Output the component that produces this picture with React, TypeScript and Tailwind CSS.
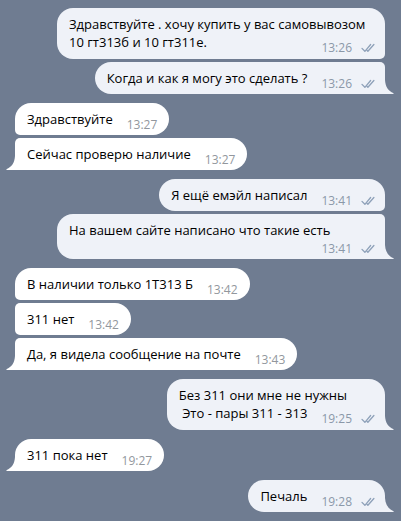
import React from "react";

type Msg = {
  out: boolean;
  lines: string[];
  time: string;
  first: boolean;
  tail: boolean;
  wide?: boolean;
  timeBelow?: boolean;
};

const groups: Msg[][] = [
  [
    {
      out: true,
      lines: ["Здравствуйте . хочу купить у вас самовывозом", "10 гт313б и 10 гт311е."],
      time: "13:26",
      first: true,
      tail: false,
      wide: true,
    },
    { out: true, lines: ["Когда и как я могу это сделать ?"], time: "13:26", first: false, tail: true },
  ],
  [
    { out: false, lines: ["Здравствуйте"], time: "13:27", first: true, tail: false },
    { out: false, lines: ["Сейчас проверю наличие"], time: "13:27", first: false, tail: true },
  ],
  [
    { out: true, lines: ["Я ещё емэйл написал"], time: "13:41", first: true, tail: false },
    {
      out: true,
      lines: ["На вашем сайте написано что такие есть"],
      time: "13:41",
      first: false,
      tail: true,
      wide: true,
      timeBelow: true,
    },
  ],
  [
    { out: false, lines: ["В наличии только 1Т313 Б"], time: "13:42", first: true, tail: false },
    { out: false, lines: ["311 нет"], time: "13:42", first: false, tail: false },
    { out: false, lines: ["Да, я видела сообщение на почте"], time: "13:43", first: false, tail: true },
  ],
  [
    {
      out: true,
      lines: ["Без 311 они мне не нужны", " Это - пары 311 - 313"],
      time: "19:25",
      first: true,
      tail: true,
    },
  ],
  [{ out: false, lines: ["311 пока нет"], time: "19:27", first: true, tail: true }],
  [{ out: true, lines: ["Печаль"], time: "19:28", first: true, tail: true }],
];

function Checks() {
  return (
    <svg width="16" height="10" viewBox="0 0 16 10" fill="none" className="ml-[9px] shrink-0">
      <path d="M1 5.4 L3.9 8.3 L9.6 1.5" stroke="#8ea1b9" strokeWidth="1.3" strokeLinecap="round" strokeLinejoin="round" />
      <path d="M5.9 7.2 L6.9 8.3 L12.9 1.5" stroke="#8ea1b9" strokeWidth="1.3" strokeLinecap="round" strokeLinejoin="round" />
    </svg>
  );
}

function Meta({ out, time }: { out: boolean; time: string }) {
  return (
    <div className="flex items-center leading-[13px]">
      <span className={out ? "text-[12px] text-[#8b98a8]" : "text-[12px] text-[#92979d]"}>{time}</span>
      {out && <Checks />}
    </div>
  );
}

function Tail({ out }: { out: boolean }) {
  if (out) {
    return (
      <svg
        width="10"
        height="14"
        viewBox="0 0 10 14"
        className="absolute right-[-9px] bottom-0"
      >
        <path d="M0 0 L1 0 C1.4 6.5 4 10.8 9.6 13.3 Q10 14 9 14 L0 14 Z" fill="#eff2f8" />
      </svg>
    );
  }
  return (
    <svg width="10" height="14" viewBox="0 0 10 14" className="absolute left-[-9px] bottom-0">
      <path d="M10 0 L9 0 C8.6 6.5 6 10.8 0.4 13.3 Q0 14 1 14 L10 14 Z" fill="#ffffff" />
    </svg>
  );
}

function Bubble({ m }: { m: Msg }) {
  const side = m.out
    ? "self-end bg-[#eff2f8] rounded-tl-[16px] rounded-bl-[16px] pr-[8px]"
    : "self-start bg-white rounded-tr-[16px] rounded-br-[16px] pr-[12px]";
  const topCorner = m.out
    ? m.first
      ? "rounded-tr-[16px]"
      : "rounded-tr-[5px]"
    : m.first
    ? "rounded-tl-[16px]"
    : "rounded-tl-[5px]";
  const bottomCorner = m.out
    ? m.tail
      ? "rounded-br-none"
      : "rounded-br-[5px]"
    : m.tail
    ? "rounded-bl-none"
    : "rounded-bl-[5px]";
  const width = m.wide ? "w-[328px]" : "";
  const multi = m.lines.length > 1;
  const last = m.lines[m.lines.length - 1];

  return (
    <div className={`relative pl-[12px] pt-[7px] ${multi ? "pb-[8px]" : "pb-[7px]"} ${side} ${topCorner} ${bottomCorner} ${width}`}>
      {m.lines.slice(0, -1).map((l, i) => (
        <div key={i} className="whitespace-pre text-[13px] leading-[18px] text-black">
          {l}
        </div>
      ))}
      {m.timeBelow ? (
        <>
          <div className="whitespace-pre text-[13px] leading-[18px] text-black">{last}</div>
          <div className="flex justify-end mt-[3px] mb-[-3px]">
            <Meta out={m.out} time={m.time} />
          </div>
        </>
      ) : (
        <div className="flex items-end">
          <span className="whitespace-pre text-[13px] leading-[18px] text-black">{last}</span>
          <div className="ml-auto pl-[14px] mb-[-3px]">
            <Meta out={m.out} time={m.time} />
          </div>
        </div>
      )}
      {m.tail && <Tail out={m.out} />}
    </div>
  );
}

export default function App() {
  return (
    <div
      className="w-[401px] h-[521px] overflow-hidden bg-[#6f7c91] pl-[15px] pr-[16px] pt-[8px] flex flex-col gap-[9px]"
      style={{ fontFamily: '"Open Sans", "Noto Sans", sans-serif' }}
    >
      {groups.map((g, gi) => (
        <div key={gi} className="flex flex-col gap-[3px]">
          {g.map((m, mi) => (
            <Bubble key={mi} m={m} />
          ))}
        </div>
      ))}
    </div>
  );
}
